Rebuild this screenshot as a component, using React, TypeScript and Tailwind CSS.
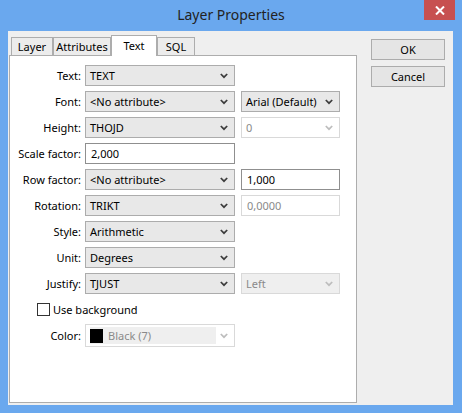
import React from "react";

function Chevron({ disabled }: { disabled?: boolean }) {
  return (
    <svg width="8" height="6" viewBox="0 0 8 6" className="shrink-0">
      <polyline
        points="0.8,1 4,4.2 7.2,1"
        fill="none"
        stroke={disabled ? "#bdbdbd" : "#3c3c3c"}
        strokeWidth="1.7"
      />
    </svg>
  );
}

function Select({
  value,
  wide = true,
  disabled = false,
  greyed = false,
}: {
  value: string;
  wide?: boolean;
  disabled?: boolean;
  greyed?: boolean;
}) {
  const w = wide ? "w-[150px]" : "w-[99px]";
  const cls = disabled
    ? greyed
      ? "border-[#d9d9d9] bg-[#efefef] text-[#8a8a8a]"
      : "border-[#d9d9d9] bg-white text-[#8a8a8a]"
    : "border-[#acacac] bg-[#e8e8e8] text-black";
  return (
    <div
      className={`${w} h-[21px] border ${cls} flex items-center pl-[4px] pr-[6px] shrink-0`}
    >
      <span className="flex-1 whitespace-nowrap">{value}</span>
      <Chevron disabled={disabled} />
    </div>
  );
}

function Input({
  value,
  wide = true,
  disabled = false,
}: {
  value: string;
  wide?: boolean;
  disabled?: boolean;
}) {
  const w = wide ? "w-[150px]" : "w-[99px]";
  const cls = disabled
    ? "border-[#d9d9d9] text-[#8a8a8a]"
    : "border-[#8f8f8f] text-black";
  return (
    <div
      className={`${w} h-[21px] border ${cls} bg-white flex items-center pl-[5px] shrink-0`}
    >
      {value}
    </div>
  );
}

function Row({ label, children }: { label: string; children: React.ReactNode }) {
  return (
    <div className="flex items-center h-[21px]">
      <div className="w-[72px] text-right pr-[1px] shrink-0 whitespace-nowrap">{label}</div>
      <div className="ml-[3px] flex items-center gap-[6px]">{children}</div>
    </div>
  );
}

function Tab({
  label,
  width,
  active = false,
}: {
  label: string;
  width: string;
  active?: boolean;
}) {
  if (active) {
    return (
      <div
        className={`${width} h-[21px] -mb-px relative z-10 bg-white border border-b-0 border-[#adadad] flex items-start justify-center pt-[3px] text-black`}
      >
        {label}
      </div>
    );
  }
  return (
    <div
      className={`${width} h-[18px] bg-[#ececec] border border-b-0 border-[#adadad] flex items-center justify-center text-black whitespace-nowrap`}
    >
      {label}
    </div>
  );
}

export default function App() {
  return (
    <div className="w-[462px] h-[413px] bg-[#6aa8ee] flex flex-col font-['Noto_Sans',sans-serif] text-[11px] leading-[14px] text-black">
      <div className="h-[31px] flex items-start shrink-0">
        <div className="flex-1 h-[30px] flex items-center justify-center pl-[38px] text-[14px] leading-[18px] text-[#222]">
          Layer Properties
        </div>
        <div className="w-[31px] h-[20px] bg-[#c75050] mr-[7px] flex items-center justify-center">
          <svg width="10" height="9" viewBox="0 0 10 9">
            <line x1="1" y1="0.5" x2="9" y2="8.5" stroke="white" strokeWidth="2" />
            <line x1="9" y1="0.5" x2="1" y2="8.5" stroke="white" strokeWidth="2" />
          </svg>
        </div>
      </div>
      <div className="ml-[8px] mr-[9px] h-[374px] bg-[#efefef] flex pt-[4px] pl-[1px]">
        <div className="w-[348px] flex flex-col">
          <div className="h-[20px] flex items-end pl-[2px]">
            <Tab label="Layer" width="w-[42px]" />
            <Tab label="Attributes" width="w-[58px]" />
            <Tab label="Text" width="w-[46px]" active />
            <Tab label="SQL" width="w-[38px]" />
          </div>
          <div className="h-[348px] bg-white border border-[#adadad] pt-[9px]">
            <div className="flex flex-col gap-[5px]">
              <Row label="Text:">
                <Select value="TEXT" />
              </Row>
              <Row label="Font:">
                <Select value="<No attribute>" />
                <Select value="Arial (Default)" wide={false} />
              </Row>
              <Row label="Height:">
                <Select value="THOJD" />
                <Select value="0" wide={false} disabled />
              </Row>
              <Row label="Scale factor:">
                <Input value="2,000" />
              </Row>
              <Row label="Row factor:">
                <Select value="<No attribute>" />
                <Input value="1,000" wide={false} />
              </Row>
              <Row label="Rotation:">
                <Select value="TRIKT" />
                <Input value="0,0000" wide={false} disabled />
              </Row>
              <Row label="Style:">
                <Select value="Arithmetic" />
              </Row>
              <Row label="Unit:">
                <Select value="Degrees" />
              </Row>
              <Row label="Justify:">
                <Select value="TJUST" />
                <Select value="Left" wide={false} disabled greyed />
              </Row>
            </div>
            <div className="mt-[9px] pl-[27px] flex items-center h-[13px]">
              <div className="w-[13px] h-[13px] border border-[#333] bg-white shrink-0" />
              <span className="ml-[3px] whitespace-nowrap">Use background</span>
            </div>
            <div className="mt-[8px] flex items-center h-[23px]">
              <div className="w-[72px] text-right pr-[1px] shrink-0">Color:</div>
              <div className="ml-[3px] w-[150px] h-[23px] border border-[#d9d9d9] bg-white flex items-center pl-[4px] pr-[6px]">
                <div className="w-[126px] h-[17px] bg-[#efefef] flex items-center">
                  <div className="w-[13px] h-[14px] bg-black shrink-0" />
                  <span className="ml-[5px] text-[#8a8a8a] whitespace-nowrap">Black (7)</span>
                </div>
                <div className="flex-1" />
                <Chevron disabled />
              </div>
            </div>
          </div>
        </div>
        <div className="ml-[14px] pt-[4px] flex flex-col gap-[6px]">
          <div className="w-[74px] h-[21px] border border-[#acacac] bg-[#e5e5e5] flex items-center justify-center">
            OK
          </div>
          <div className="w-[74px] h-[21px] border border-[#acacac] bg-[#e5e5e5] flex items-center justify-center">
            Cancel
          </div>
        </div>
      </div>
    </div>
  );
}
